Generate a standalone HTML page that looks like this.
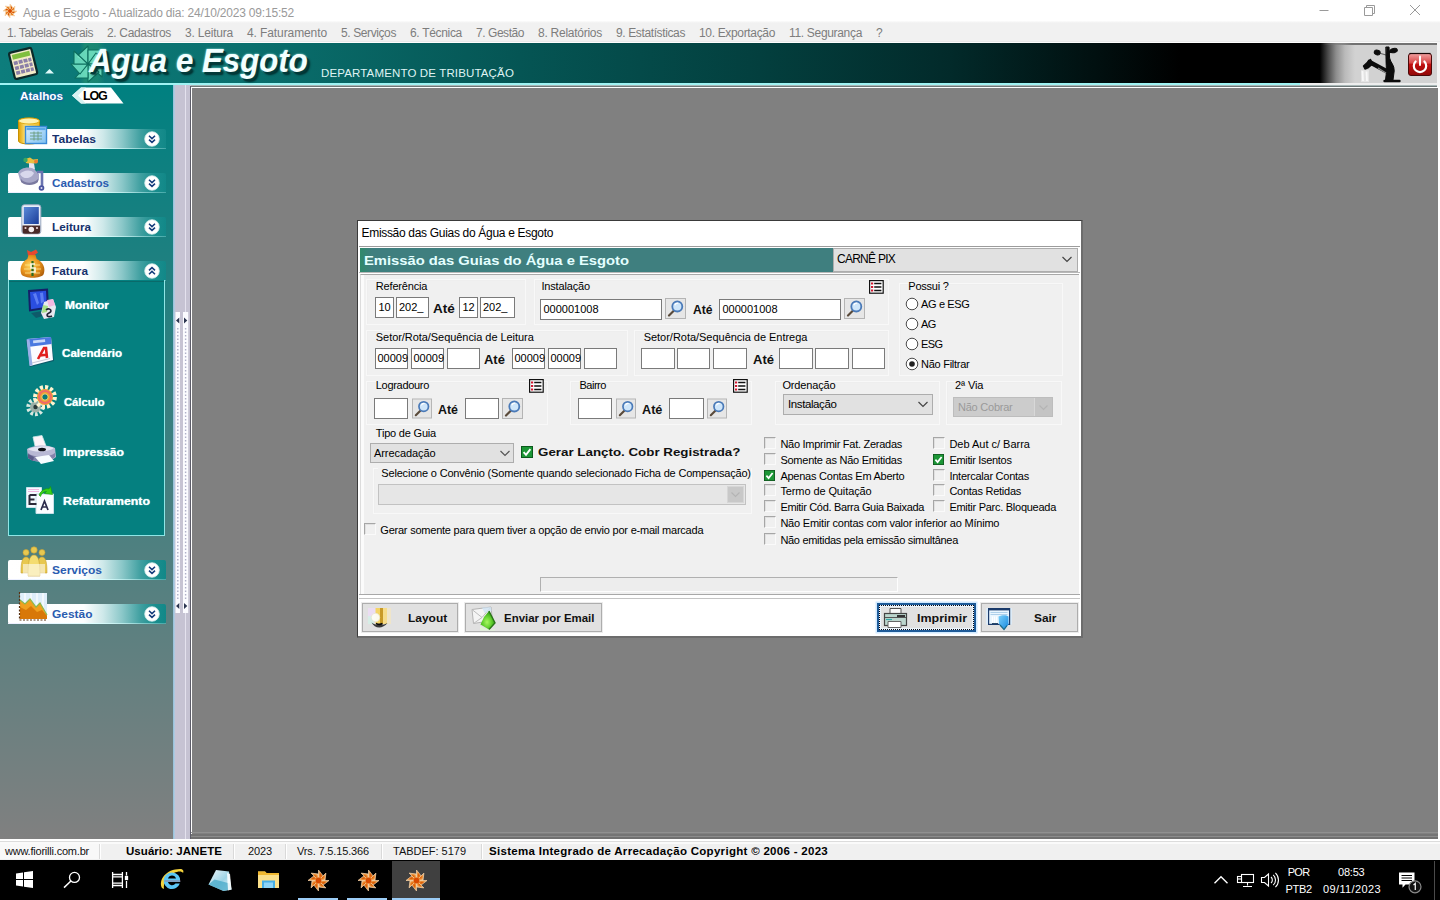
<!DOCTYPE html>
<html><head><meta charset="utf-8"><title>Agua e Esgoto</title>
<style>
html,body{margin:0;padding:0;}
body{width:1440px;height:900px;overflow:hidden;position:relative;background:#808080;font-family:"Liberation Sans",sans-serif;font-size:11px;}
body div,body span,body svg{position:absolute;box-sizing:border-box;}
svg{overflow:visible}
.inp{background:#fff;border:1px solid #7a7a7a;}
.btn{background:#e1e1e1;border:1px solid #adadad;}
.cb{background:#f0f0f0;border:1px solid #a0a0a0;border-right-color:#fff;border-bottom-color:#fff;}
</style></head><body>
<div style="left:0px;top:0px;width:1440px;height:23px;background:linear-gradient(180deg,#fff 0,#fff 20.5px,#f1f1f1 23px);"></div>
<span id="t0" style="left:23px;top:4.64px;font-size:12px;line-height:16px;height:16px;color:#9a9a9a;font-weight:normal;white-space:pre;letter-spacing:-0.194px;">Agua e Esgoto - Atualizado dia: 24/10/2023 09:15:52</span>
<svg style="left:1300px;top:0" width="140" height="23"><g stroke="#9a9a9a" stroke-width="1" fill="none" transform="translate(-1300,-1)"><path d="M1319.500 11.500h9"/><path d="M1364.500 8.500h8v8h-8zM1366.500 8.500v-2h8v8h-2"/><path d="M1410 6l10 10M1420 6l-10 10"/></g></svg>
<div style="left:0px;top:23px;width:1440px;height:19px;background:#f1f1f1;"></div>
<span id="t1" style="left:7px;top:24.84px;font-size:12px;line-height:16px;height:16px;color:#7d7d7d;font-weight:normal;white-space:pre;letter-spacing:-0.422px;">1. Tabelas Gerais</span>
<span id="t2" style="left:107px;top:24.84px;font-size:12px;line-height:16px;height:16px;color:#7d7d7d;font-weight:normal;white-space:pre;letter-spacing:-0.337px;">2. Cadastros</span>
<span id="t3" style="left:185px;top:24.84px;font-size:12px;line-height:16px;height:16px;color:#7d7d7d;font-weight:normal;white-space:pre;letter-spacing:-0.205px;">3. Leitura</span>
<span id="t4" style="left:247px;top:24.84px;font-size:12px;line-height:16px;height:16px;color:#7d7d7d;font-weight:normal;white-space:pre;letter-spacing:-0.098px;">4. Faturamento</span>
<span id="t5" style="left:341px;top:24.84px;font-size:12px;line-height:16px;height:16px;color:#7d7d7d;font-weight:normal;white-space:pre;letter-spacing:-0.396px;">5. Serviços</span>
<span id="t6" style="left:410px;top:24.84px;font-size:12px;line-height:16px;height:16px;color:#7d7d7d;font-weight:normal;white-space:pre;letter-spacing:-0.316px;">6. Técnica</span>
<span id="t7" style="left:476px;top:24.84px;font-size:12px;line-height:16px;height:16px;color:#7d7d7d;font-weight:normal;white-space:pre;letter-spacing:-0.448px;">7. Gestão</span>
<span id="t8" style="left:538px;top:24.84px;font-size:12px;line-height:16px;height:16px;color:#7d7d7d;font-weight:normal;white-space:pre;letter-spacing:-0.260px;">8. Relatórios</span>
<span id="t9" style="left:616px;top:24.84px;font-size:12px;line-height:16px;height:16px;color:#7d7d7d;font-weight:normal;white-space:pre;letter-spacing:-0.380px;">9. Estatísticas</span>
<span id="t10" style="left:699px;top:24.84px;font-size:12px;line-height:16px;height:16px;color:#7d7d7d;font-weight:normal;white-space:pre;letter-spacing:-0.337px;">10. Exportação</span>
<span id="t11" style="left:789px;top:24.84px;font-size:12px;line-height:16px;height:16px;color:#7d7d7d;font-weight:normal;white-space:pre;letter-spacing:-0.321px;">11. Segurança</span>
<span id="t12" style="left:876px;top:24.84px;font-size:12px;line-height:16px;height:16px;color:#7d7d7d;font-weight:normal;white-space:pre;">?</span>
<div style="left:0px;top:41px;width:1440px;height:1px;background:#e9e9e9;"></div>
<div style="left:0px;top:42px;width:1440px;height:1px;background:#fdfdfd;"></div>
<div style="left:0px;top:43px;width:1440px;height:40px;background:linear-gradient(90deg,#0d7d7c 0px,#0a6f6d 250px,#055554 520px,#033f3e 760px,#022a2a 950px,#010f0f 1100px,#000 1180px,#000 1320px,#4a4a4a 1328px,#8c8c8c 1336px,#bababa 1345px,#d2d2d2 1355px,#d2d2d2 1440px);"></div>
<div style="left:0px;top:83px;width:1440px;height:2px;background:#9ff3f3;"></div>
<div style="left:1300px;top:83px;width:140px;height:2px;background:#eee;"></div>
<div style="left:0px;top:85px;width:1440px;height:1px;background:#a9b7b7;"></div>
<div style="left:0px;top:86px;width:1440px;height:1px;background:#6e7878;"></div>
<div style="left:1322px;top:43px;width:115px;height:2px;background:linear-gradient(90deg,rgba(112,112,112,0),#727272 30px);"></div>
<div style="left:0px;top:85px;width:173px;height:754px;background:linear-gradient(180deg,#008080 0%,#808080 100%);"></div>
<div style="left:173px;top:85px;width:18px;height:754px;background:#c6c3d3;"></div>
<div style="left:173px;top:85px;width:2px;height:754px;background:linear-gradient(90deg,#8fc0d8,#bccde2);"></div>
<div style="left:185px;top:85px;width:1px;height:754px;background:#e4e2ee;"></div>
<div style="left:190px;top:86px;width:1px;height:753px;background:#5e5e6a;"></div>
<div style="left:191px;top:87px;width:1247px;height:752px;background:#808080;border-left:1px solid #fff;border-top:1px solid #fff;"></div>
<div style="left:191px;top:832px;width:1247px;height:1px;background:#909090;"></div>
<div style="left:191px;top:834px;width:1247px;height:2px;background:#747474;"></div>
<div style="left:191px;top:836px;width:1247px;height:1px;background:#8c8c8c;"></div>
<div style="left:191px;top:837px;width:1247px;height:2px;background:#707070;"></div>
<div style="left:1438px;top:85px;width:2px;height:754px;background:#fff;"></div>
<div style="left:0px;top:839px;width:1440px;height:21px;background:#f0f0f0;"></div>
<div style="left:0px;top:839px;width:1440px;height:2px;background:#fff;"></div>
<div style="left:0px;top:841px;width:1440px;height:1px;background:#dcdcdc;"></div>
<div style="left:0px;top:842px;width:1440px;height:2px;background:#fafafa;"></div>
<div style="left:0px;top:844px;width:99px;height:15px;background:#f8f8f8;"></div>
<div style="left:99px;top:844px;width:1px;height:15px;background:#d9d9d9;"></div>
<div style="left:100px;top:844px;width:1px;height:15px;background:#fff;"></div>
<div style="left:233px;top:844px;width:1px;height:15px;background:#d9d9d9;"></div>
<div style="left:234px;top:844px;width:1px;height:15px;background:#fff;"></div>
<div style="left:285px;top:844px;width:1px;height:15px;background:#d9d9d9;"></div>
<div style="left:286px;top:844px;width:1px;height:15px;background:#fff;"></div>
<div style="left:381px;top:844px;width:1px;height:15px;background:#d9d9d9;"></div>
<div style="left:382px;top:844px;width:1px;height:15px;background:#fff;"></div>
<div style="left:481px;top:844px;width:1px;height:15px;background:#d9d9d9;"></div>
<div style="left:482px;top:844px;width:1px;height:15px;background:#fff;"></div>
<span id="t13" style="left:5px;top:843.69px;font-size:11px;line-height:14px;height:14px;color:#111;font-weight:normal;white-space:pre;letter-spacing:-0.211px;">www.fiorilli.com.br</span>
<span id="t14" style="left:126px;top:843.52px;font-size:11.5px;line-height:15px;height:15px;color:#000;font-weight:bold;white-space:pre;letter-spacing:0.052px;">Usuário: JANETE</span>
<span id="t15" style="left:248px;top:843.69px;font-size:11px;line-height:14px;height:14px;color:#111;font-weight:normal;white-space:pre;letter-spacing:-0.121px;">2023</span>
<span id="t16" style="left:297px;top:843.69px;font-size:11px;line-height:14px;height:14px;color:#111;font-weight:normal;white-space:pre;letter-spacing:-0.147px;">Vrs. 7.5.15.366</span>
<span id="t17" style="left:393px;top:843.69px;font-size:11px;line-height:14px;height:14px;color:#111;font-weight:normal;white-space:pre;letter-spacing:-0.014px;">TABDEF: 5179</span>
<span id="t18" style="left:489px;top:843.52px;font-size:11.5px;line-height:15px;height:15px;color:#000;font-weight:bold;white-space:pre;letter-spacing:0.295px;">Sistema Integrado de Arrecadação Copyright © 2006 - 2023</span>
<div style="left:0px;top:860px;width:1440px;height:40px;background:#000;"></div>
<svg style="left:6px;top:45px" width="34" height="36" viewBox="0 0 34 36">
<g transform="rotate(-14 17 18)">
<rect x="5.5" y="5" width="23" height="27" rx="2" fill="#f3ecc8" stroke="#0c2a2a" stroke-width="2.2"/>
<rect x="8" y="7.5" width="18" height="5" fill="#7fbf3f"/>
<g fill="#8a7fa8"><rect x="8" y="14.5" width="4" height="3.6"/><rect x="13" y="14.5" width="4" height="3.6"/><rect x="18" y="14.5" width="4" height="3.6"/><rect x="23" y="14.5" width="3" height="3.6"/>
<rect x="8" y="19.5" width="4" height="3.6"/><rect x="13" y="19.5" width="4" height="3.6"/><rect x="18" y="19.5" width="4" height="3.6"/><rect x="23" y="19.5" width="3" height="3.6"/>
<rect x="8" y="24.5" width="4" height="3.6"/><rect x="13" y="24.5" width="4" height="3.6"/><rect x="18" y="24.5" width="4" height="3.6"/><rect x="23" y="24.5" width="3" height="3.6"/></g>
</g></svg>
<svg style="left:44px;top:68px" width="12" height="7"><path d="M1 5.5L5.5 1L10 5.5z" fill="#dffafa"/></svg>
<div style="left:80px;top:43px;width:25px;height:40px;background:linear-gradient(90deg,rgba(40,150,110,0),rgba(40,150,110,.55) 20%,rgba(40,150,110,.45) 70%,rgba(40,150,110,0));"></div>
<svg style="left:68px;top:44px" width="40" height="40" viewBox="-20 -20 40 40">
<g fill="rgba(125,238,205,.78)" stroke="#0d6e5e" stroke-width="1.1" stroke-linejoin="round">
<path d="M0 0L0 -18L-12 -7z"/><path d="M0 0L13 -14L0 -14z" /><path d="M0 0L18 0L8 -11z"/><path d="M0 0L14 13L14 0z"/>
<path d="M0 0L0 18L11 8z"/><path d="M0 0L-13 14L0 14z"/><path d="M0 0L-17 0L-8 10z"/><path d="M0 0L-14 -13L-14 0z"/>
</g></svg>
<span id="t19" style="left:89px;top:37.72px;font-size:34px;line-height:44px;height:44px;color:#f2ffff;font-weight:bold;white-space:pre;font-style:italic;transform:scaleX(0.9200);transform-origin:0 50%;text-shadow:2px 2px 0 #013a3a,3px 3px 2px #012c2c,0 0 2px #bff;">Agua e Esgoto</span>
<span id="t20" style="left:321px;top:66.02px;font-size:11.5px;line-height:15px;height:15px;color:#dff3f3;font-weight:normal;white-space:pre;letter-spacing:0.148px;">DEPARTAMENTO DE TRIBUTAÇÃO</span>
<svg style="left:1358px;top:44px" width="44" height="40" viewBox="0 0 44 40">
<path d="M3 26h8v12H3z" fill="#e9e9e9" opacity=".8"/>
<g fill="#0c0c0c" stroke="#0c0c0c" stroke-linecap="round" stroke-linejoin="round">
<path d="M28.200 3h2.800l.6 11c.8 4.500 5 7 4.600 13l-1.200 9h-7.500l1-8.500c.2-4-.8-8-.5-12z" stroke-width="1"/>
<ellipse cx="19.200" cy="8.500" rx="3" ry="2.300" transform="rotate(15 19.200 8.500)" stroke-width="1"/>
<path d="M22 9.200l6 1.800" stroke-width="1.200" fill="none" opacity=".55"/>
<ellipse cx="35.800" cy="6.600" rx="3.600" ry="2.100" transform="rotate(-12 35.800 6.600)" stroke-width="1"/>
<path d="M30 8.500l4-1.500" stroke-width="2.600" fill="none"/>
<path d="M32 29L11.500 18" stroke-width="4.600" fill="none"/>
<path d="M12.500 15.500l-7 6.500l1.500 3l3.500-1.500l4-3.500z" stroke-width="1.400"/>
<path d="M26.500 37h15" stroke-width="2.400" fill="none"/>
</g>
<path d="M20 24l8 5" stroke="#8a8a8a" stroke-width="1.400" fill="none"/>
<path d="M4.500 27l.5 10M8.500 27.500l.5 9.500" stroke="#f8f8f8" stroke-width="1.800" fill="none"/>
</svg>
<svg style="left:1407px;top:52px" width="26" height="25" viewBox="0 0 26 25">
<defs><linearGradient id="pw" x1="0" y1="0" x2="0" y2="1"><stop offset="0" stop-color="#f0a0a0"/><stop offset=".42" stop-color="#d84848"/><stop offset=".5" stop-color="#c01010"/><stop offset="1" stop-color="#900808"/></linearGradient></defs>
<rect x="1.500" y="1.500" width="23" height="22" rx="2.500" fill="url(#pw)" stroke="#4a0a0a" stroke-width="1"/>
<path d="M2.500 1.500h21" stroke="#1a0505" stroke-width="1.200"/>
<path d="M8.600 9.500a6.200 6.200 0 1 0 8.800 0" fill="none" stroke="#fff" stroke-width="2.200" stroke-linecap="round"/>
<path d="M13 4.500v8.500" stroke="#fff" stroke-width="2" stroke-linecap="round"/>
</svg>
<div style="left:1437px;top:42px;width:3px;height:45px;background:#f4f4f4;"></div>
<span id="t21" style="left:19.5px;top:88.52px;font-size:11.5px;line-height:15px;height:15px;color:#fff;font-weight:bold;white-space:pre;transform:scaleX(1.0196);transform-origin:0 50%;text-shadow:1px 1px 1px #1a5fa0,-1px 0 1px #1a6fa8,0 -1px 1px #1a6fa8;">Atalhos</span>
<svg style="left:70px;top:86px" width="56" height="19"><path d="M2 9.5L11 1.5H41L53.5 17.5H11z" fill="#fff"/><path d="M2 9.5L11 1.5H16L8 9.5L16 17.5H11z" fill="#d6f2f2"/></svg>
<span id="t22" style="left:83px;top:87.97px;font-size:12.5px;line-height:16px;height:16px;color:#000;font-weight:bold;white-space:pre;letter-spacing:-1.198px;">LOG</span>
<div style="left:8px;top:129px;width:158px;height:20px;background:linear-gradient(90deg,#fff 0,#fdfefe 48%,#cfe9ea 60%,#8cc8c9 72%,#3f9fa0 84%,#1a8e8e 93%,#128888 100%);border-radius:2px;"></div>
<div style="left:8px;top:148px;width:158px;height:1px;background:linear-gradient(90deg,#eef 0,#dff 55%,rgba(120,200,200,.5) 100%);"></div>
<span id="t23" style="left:52px;top:131.82px;font-size:11.5px;line-height:15px;height:15px;color:#16306c;font-weight:bold;white-space:pre;transform:scaleX(1.0480);transform-origin:0 50%;">Tabelas</span>
<svg style="left:144px;top:131px" width="16" height="16" viewBox="-8 -8 16 16"><circle r="7.3" fill="#fff" stroke="#cfeaea" stroke-width=".8"/><path d="M-3 -3.2L0 -0.4L3 -3.2M-3 0.6L0 3.4L3 0.6" fill="none" stroke="#123a7a" stroke-width="1.5"/></svg>
<div style="left:8px;top:173px;width:158px;height:20px;background:linear-gradient(90deg,#fff 0,#fdfefe 48%,#cfe9ea 60%,#8cc8c9 72%,#3f9fa0 84%,#1a8e8e 93%,#128888 100%);border-radius:2px;"></div>
<div style="left:8px;top:192px;width:158px;height:1px;background:linear-gradient(90deg,#eef 0,#dff 55%,rgba(120,200,200,.5) 100%);"></div>
<span id="t24" style="left:52px;top:175.82px;font-size:11.5px;line-height:15px;height:15px;color:#2a5cb0;font-weight:bold;white-space:pre;transform:scaleX(1.0133);transform-origin:0 50%;">Cadastros</span>
<svg style="left:144px;top:175px" width="16" height="16" viewBox="-8 -8 16 16"><circle r="7.3" fill="#fff" stroke="#cfeaea" stroke-width=".8"/><path d="M-3 -3.2L0 -0.4L3 -3.2M-3 0.6L0 3.4L3 0.6" fill="none" stroke="#123a7a" stroke-width="1.5"/></svg>
<div style="left:8px;top:217px;width:158px;height:20px;background:linear-gradient(90deg,#fff 0,#fdfefe 48%,#cfe9ea 60%,#8cc8c9 72%,#3f9fa0 84%,#1a8e8e 93%,#128888 100%);border-radius:2px;"></div>
<div style="left:8px;top:236px;width:158px;height:1px;background:linear-gradient(90deg,#eef 0,#dff 55%,rgba(120,200,200,.5) 100%);"></div>
<span id="t25" style="left:52px;top:219.82px;font-size:11.5px;line-height:15px;height:15px;color:#16306c;font-weight:bold;white-space:pre;transform:scaleX(1.0171);transform-origin:0 50%;">Leitura</span>
<svg style="left:144px;top:219px" width="16" height="16" viewBox="-8 -8 16 16"><circle r="7.3" fill="#fff" stroke="#cfeaea" stroke-width=".8"/><path d="M-3 -3.2L0 -0.4L3 -3.2M-3 0.6L0 3.4L3 0.6" fill="none" stroke="#123a7a" stroke-width="1.5"/></svg>
<div style="left:8px;top:261px;width:158px;height:20px;background:linear-gradient(90deg,#fff 0,#fdfefe 48%,#cfe9ea 60%,#8cc8c9 72%,#3f9fa0 84%,#1a8e8e 93%,#128888 100%);border-radius:2px;"></div>
<div style="left:8px;top:280px;width:158px;height:1px;background:linear-gradient(90deg,#eef 0,#dff 55%,rgba(120,200,200,.5) 100%);"></div>
<span id="t26" style="left:52px;top:263.82px;font-size:11.5px;line-height:15px;height:15px;color:#16306c;font-weight:bold;white-space:pre;transform:scaleX(1.0240);transform-origin:0 50%;">Fatura</span>
<svg style="left:144px;top:263px" width="16" height="16" viewBox="-8 -8 16 16"><circle r="7.3" fill="#fff" stroke="#cfeaea" stroke-width=".8"/><path d="M-3 -3.2L0 -0.4L3 -3.2M-3 0.6L0 3.4L3 0.6" transform="scale(1,-1)" fill="none" stroke="#123a7a" stroke-width="1.5"/></svg>
<div style="left:8px;top:560px;width:158px;height:20px;background:linear-gradient(90deg,#fff 0,#fdfefe 48%,#cfe9ea 60%,#8cc8c9 72%,#3f9fa0 84%,#1a8e8e 93%,#128888 100%);border-radius:2px;"></div>
<div style="left:8px;top:579px;width:158px;height:1px;background:linear-gradient(90deg,#eef 0,#dff 55%,rgba(120,200,200,.5) 100%);"></div>
<span id="t27" style="left:52px;top:562.82px;font-size:11.5px;line-height:15px;height:15px;color:#2a5cb0;font-weight:bold;white-space:pre;transform:scaleX(1.0427);transform-origin:0 50%;">Serviços</span>
<svg style="left:144px;top:562px" width="16" height="16" viewBox="-8 -8 16 16"><circle r="7.3" fill="#fff" stroke="#cfeaea" stroke-width=".8"/><path d="M-3 -3.2L0 -0.4L3 -3.2M-3 0.6L0 3.4L3 0.6" fill="none" stroke="#123a7a" stroke-width="1.5"/></svg>
<div style="left:8px;top:604px;width:158px;height:20px;background:linear-gradient(90deg,#fff 0,#fdfefe 48%,#cfe9ea 60%,#8cc8c9 72%,#3f9fa0 84%,#1a8e8e 93%,#128888 100%);border-radius:2px;"></div>
<div style="left:8px;top:623px;width:158px;height:1px;background:linear-gradient(90deg,#eef 0,#dff 55%,rgba(120,200,200,.5) 100%);"></div>
<span id="t28" style="left:52px;top:606.82px;font-size:11.5px;line-height:15px;height:15px;color:#2a5cb0;font-weight:bold;white-space:pre;transform:scaleX(1.0385);transform-origin:0 50%;">Gestão</span>
<svg style="left:144px;top:606px" width="16" height="16" viewBox="-8 -8 16 16"><circle r="7.3" fill="#fff" stroke="#cfeaea" stroke-width=".8"/><path d="M-3 -3.2L0 -0.4L3 -3.2M-3 0.6L0 3.4L3 0.6" fill="none" stroke="#123a7a" stroke-width="1.5"/></svg>
<div style="left:8px;top:280px;width:157px;height:256px;background:#058080;border:1px solid #8fe6e6;border-top:none;"></div>
<div style="left:9px;top:281px;width:155px;height:1px;background:#0a6a6a;"></div>
<span id="t29" style="left:64.5px;top:297.52px;font-size:11.5px;line-height:15px;height:15px;color:#fff;font-weight:bold;white-space:pre;transform:scaleX(1.0437);transform-origin:0 50%;text-shadow:0 0 1px #cff;">Monitor</span>
<span id="t30" style="left:62px;top:345.52px;font-size:11.5px;line-height:15px;height:15px;color:#fff;font-weight:bold;white-space:pre;transform:scaleX(1.0095);transform-origin:0 50%;text-shadow:0 0 1px #cff;">Calendário</span>
<span id="t31" style="left:64px;top:394.52px;font-size:11.5px;line-height:15px;height:15px;color:#fff;font-weight:bold;white-space:pre;transform:scaleX(0.9748);transform-origin:0 50%;text-shadow:0 0 1px #cff;">Cálculo</span>
<span id="t32" style="left:63px;top:444.52px;font-size:11.5px;line-height:15px;height:15px;color:#fff;font-weight:bold;white-space:pre;transform:scaleX(1.0603);transform-origin:0 50%;text-shadow:0 0 1px #cff;">Impressão</span>
<span id="t33" style="left:63px;top:493.52px;font-size:11.5px;line-height:15px;height:15px;color:#fff;font-weight:bold;white-space:pre;transform:scaleX(1.0720);transform-origin:0 50%;text-shadow:0 0 1px #cff;">Refaturamento</span>
<svg style="left:175px;top:312px" width="15" height="301"><rect x=".5" y="0" width="4.5" height="301" fill="#fbfbff"/><rect x="8" y="0" width="5.2" height="301" fill="#fbfbff"/><g stroke="#aeb0c8" stroke-width="1.4" stroke-dasharray="1.5 2" fill="none"><path d="M2.800 16V288M10.600 16V288"/></g><g fill="#2c3550"><path d="M4.300 5.500L1 8.500L4.300 11.500zM9 5.500L12.300 8.500L9 11.500zM4.300 291L1 294L4.300 297zM9 291L12.300 294L9 297z"/></g></svg>
<svg style="left:17px;top:116px" width="32" height="30" viewBox="0 0 32 30">
<defs><linearGradient id="cy" x1="0" y1="0" x2="1" y2="0"><stop offset="0" stop-color="#e0a000"/><stop offset=".35" stop-color="#ffe680"/><stop offset="1" stop-color="#f0b820"/></linearGradient>
<linearGradient id="bw" x1="0" y1="0" x2="1" y2="1"><stop offset="0" stop-color="#d8efff"/><stop offset="1" stop-color="#7fc0f0"/></linearGradient></defs>
<path d="M1.5 5c0-4 21-4 21 0v20c0 4-21 4-21 0z" fill="url(#cy)" stroke="#c89000" stroke-width="1"/>
<ellipse cx="12" cy="5" rx="10.5" ry="3" fill="#fff2b0" stroke="#d8a000" stroke-width=".8"/>
<rect x="8.5" y="10.5" width="21" height="17" fill="url(#bw)" stroke="#3a8ad8" stroke-width="1.4"/>
<rect x="9.5" y="11.5" width="19" height="2.6" fill="#5aa8e8"/>
<path d="M13 17h12M13 20h12M13 23h12M17 15.5v9M21 15.5v9" stroke="#6a9a7a" stroke-width=".9" fill="none"/>
</svg>
<svg style="left:16px;top:156px" width="32" height="38" viewBox="0 0 32 38">
<path d="M9 3l5-1.5l3 2l5-.5l-1 4l-6 1l-5-1z" fill="#e8c040"/><circle cx="9.5" cy="4" r="2.2" fill="#3aa860"/><circle cx="20" cy="5.5" r="2" fill="#e88030"/>
<path d="M13 7l5 .5l1 6l-6 1z" fill="#e8e4f0"/>
<path d="M2 17c2-6 14-8 18-2l3 3v6c-4 6-16 6-19 0z" fill="#a8a8c8"/>
<path d="M4 18c3-4 11-5 14-1c-2 5-10 8-14 1z" fill="#d8d8ec"/>
<path d="M5 23c4 5 12 5 17 0v3c-4 4-13 4-17 0z" fill="#7a7aa0"/>
<path d="M21 16h5v5M26 20v11" stroke="#6a74b0" stroke-width="2.6" fill="none"/><circle cx="25.5" cy="32" r="2.8" fill="#4a54a0"/><circle cx="25.5" cy="32" r="1" fill="#dde"/>
</svg>
<svg style="left:21px;top:204px" width="21" height="31" viewBox="0 0 21 31">
<defs><linearGradient id="ps" x1="0" y1="0" x2="1" y2="1"><stop offset="0" stop-color="#5a8ad8"/><stop offset="1" stop-color="#1a3c98"/></linearGradient></defs>
<rect x=".8" y=".8" width="19" height="29" rx="2.5" fill="#e8eef8" stroke="#9aa8c0" stroke-width="1"/>
<rect x="2.8" y="3" width="15" height="17" fill="url(#ps)"/>
<path d="M1.5 21.5h17.6v6a2.2 2.2 0 0 1-2.2 2.2H3.7a2.2 2.2 0 0 1-2.2-2.2z" fill="#4a2a28"/>
<circle cx="10.3" cy="25.5" r="2.8" fill="#f4ecec"/><circle cx="4.5" cy="24" r="1.1" fill="#f0d8d8"/><circle cx="16" cy="24" r="1.1" fill="#f0d8d8"/>
</svg>
<svg style="left:19px;top:248px" width="27" height="32" viewBox="0 0 27 32">
<defs><radialGradient id="mb" cx=".4" cy=".45" r=".7"><stop offset="0" stop-color="#ffd860"/><stop offset=".55" stop-color="#e8921c"/><stop offset="1" stop-color="#a85808"/></radialGradient></defs>
<path d="M8 2l4 2l5-2.5l2 3l-4 3l-6 0z" fill="#e84830"/>
<path d="M9.5 7h7l1.2 4c7 3 9 10 7 15c-2 5-20 5-22.4 0c-2-5 0-12 6-15z" fill="url(#mb)"/>
<path d="M6 17h15M5 21h17M6 25h15" stroke="#ffe890" stroke-width="1.2" opacity=".8" fill="none"/>
<path d="M13.5 13v15" stroke="#2a6a20" stroke-width="2.2"/><path d="M16 16h-4v4h4v4h-4.5" stroke="#f8f8e0" stroke-width="1.6" fill="none"/>
</svg>
<svg style="left:25px;top:288px" width="32" height="33" viewBox="0 0 32 33">
<path d="M3 2l20-1.5l1 20l-20 3z" fill="#14206a"/><path d="M5 4l16-1.2l.8 16l-15.8 2.4z" fill="#2a4ee0"/>
<path d="M8 6l3-1l3 10l-2 2zM15 5l3-.5l1 9l-3 2z" fill="#6a8af8" opacity=".8"/>
<path d="M6 25l16-3l3 4l-14 4z" fill="#0e5a6a"/>
<path d="M19 14l9-3l3 8l-2 10l-10 2l-3-6z" fill="#e8e8f0"/><path d="M22 12l6-1l2 6l-6 2z" fill="#f4b8e0"/><path d="M18 17l5 1l-1 6l-5 1z" fill="#a8e088"/>
<path d="M21 22c2-2 5-1 5 1s-4 2-4 4s3 2 5 1" stroke="#223" stroke-width="1.6" fill="none"/>
</svg>
<svg style="left:24px;top:336px" width="32" height="33" viewBox="0 0 32 33">
<path d="M2 4l25-3l3 24l-24 6z" fill="#0e5a6a"/><path d="M3 3l24-2l2 23l-23 6z" fill="#fbfbff"/>
<path d="M3 3l24-2l.6 7l-24 3z" fill="#4a78e0"/><path d="M9 4.5l12-1.2l.2 2.6l-12 1.4z" fill="#c8d8f8"/><path d="M2.5 3.5l3-.3l3 26l-3 .8z" fill="#9ab0e8"/>
<path d="M14 23l6-11l2 0l1 10M16 19.5l6-.8" stroke="#e02020" stroke-width="2.6" fill="none"/>
<path d="M8 27l18-4.5" stroke="#c8c8d8" stroke-width="1"/>
</svg>
<svg style="left:24px;top:384px" width="34" height="34" viewBox="0 0 34 34">
<g transform="translate(11.5,23)"><circle r="7" fill="none" stroke="#d8e8e0" stroke-width="4.5" stroke-dasharray="2.6 1.8"/><circle r="5.5" fill="#9ab0a8"/><circle r="2.2" fill="#2a3a3a"/></g>
<g transform="translate(21,13)"><circle r="9.6" fill="none" stroke="#fff4d0" stroke-width="4.6" stroke-dasharray="3 2"/><circle r="8" fill="#f0a030"/><circle r="6" fill="none" stroke="#f06a6a" stroke-width="2"/><circle r="3.2" fill="#0a7a78"/><circle r="3.2" fill="none" stroke="#ffd070" stroke-width="1"/></g>
</svg>
<svg style="left:25px;top:434px" width="32" height="32" viewBox="0 0 32 32">
<path d="M8 3l9-1.5l5 13l-11 2z" fill="#fdf4f8" stroke="#c8e8e8" stroke-width=".8"/>
<path d="M2 15c6-4 20-5 28-1l1 9c-6 6-22 6-28 1z" fill="#b8b8d4"/><path d="M3 15c6-3 20-4 26-1c-5 4-20 5-26 1z" fill="#e4e4f2"/>
<ellipse cx="17" cy="15.5" rx="4" ry="1.8" fill="#101018"/>
<path d="M3 19c6 5 20 5 27 0v4c-6 6-22 6-27 1z" fill="#8484ac"/>
<path d="M10 23l14-2l5 6l-13 3z" fill="#f8fcff"/><path d="M3 20l6 3l-1 4l-5-3z" fill="#5a5a88"/>
</svg>
<svg style="left:25px;top:486px" width="31" height="29" viewBox="0 0 31 29">
<path d="M1.5 1.5h15v20h-15z" fill="#f4fbff" stroke="#c8e0ea" stroke-width="1"/><path d="M11 8h17.5v19.5H11z" fill="#fbfdff" stroke="#c8e0ea" stroke-width="1"/>
<path d="M3 3.5h11M3 5.5h11" stroke="#f0b8e0" stroke-width="1"/>
<path d="M4.5 9h7M4.5 9v9h7M4.5 13.5h5" stroke="#2a2a3a" stroke-width="2" fill="none"/>
<path d="M16 24l3.5-9l3.5 9M17.3 21h4.6" stroke="#2a2a4a" stroke-width="1.7" fill="none"/>
<path d="M14 9c2-5 7-7 10-6l1.5-2.5l2 8l-8-1l2-2c-3 0-5 2-6 5z" fill="#38d018" stroke="#189808" stroke-width=".6"/>
</svg>
<svg style="left:19px;top:546px" width="30" height="33" viewBox="0 0 30 33">
<g fill="#e8c850" stroke="#c8a030" stroke-width=".6"><circle cx="7" cy="6.5" r="3"/><circle cx="15" cy="4" r="3.2"/><circle cx="23" cy="6.5" r="3"/>
<path d="M2 27c0-10 1-16 5-16s5 6 5 16z"/><path d="M18 27c0-10 1-16 5-16s5 6 5 16z"/><path d="M9 30c0-13 1-21 6-21s6 8 6 21z" fill="#f4dc70"/></g>
<path d="M4 18h22v12H4z" fill="#fff" opacity=".55"/>
</svg>
<svg style="left:16px;top:590px" width="33" height="33" viewBox="0 0 33 33">
<rect x="4" y="3" width="27" height="26" fill="#dfeefa"/><path d="M9 3v26M15 3v26M21 3v26M27 3v26" stroke="#fff" stroke-width="1.2"/>
<path d="M4 29V10l5 4l5-5l6 8l4-4l7 12v4z" fill="#f0a020"/><path d="M4 29V17l6 3l5-4l6 6l5-2l5 6v3z" fill="#d87808"/>
<path d="M4 10l5 4l5-5l6 8l4-4l7 12" stroke="#8ab850" stroke-width="1.2" fill="none"/>
<path d="M3.5 2v28h28" stroke="#5a3010" stroke-width="1.2" fill="none" stroke-dasharray="2 1.5"/>
</svg>
<div style="left:357px;top:220px;width:726px;height:418px;background:#fff;border:1px solid #3a3a3a;border-right:2px solid #6c6c6c;border-bottom:2px solid #6c6c6c;"></div>
<span id="t34" style="left:361.5px;top:225.04px;font-size:12px;line-height:16px;height:16px;color:#000;font-weight:normal;white-space:pre;letter-spacing:-0.312px;">Emissão das Guias do Água e Esgoto</span>
<div style="left:359px;top:246px;width:721px;height:1px;background:#9c9c9c;"></div>
<div style="left:360px;top:248px;width:473px;height:24px;background:#3f7f7f;"></div>
<div style="left:360px;top:248px;width:12px;height:24px;background:linear-gradient(90deg,#2f8a6a,#3f7f7f);"></div>
<span id="t35" style="left:364px;top:252.67px;font-size:12.5px;line-height:16px;height:16px;color:#e4ffff;font-weight:bold;white-space:pre;transform:scaleX(1.1811);transform-origin:0 50%;">Emissão das Guias do Água e Esgoto</span>
<div style="left:833px;top:248px;width:245px;height:24px;background:#e1e1e1;border:1px solid #adadad;"></div>
<span id="t36" style="left:837px;top:250.84px;font-size:12px;line-height:16px;height:16px;color:#000;font-weight:normal;white-space:pre;letter-spacing:-0.743px;">CARNÊ PIX</span>
<svg style="left:1061px;top:255px" width="12" height="9"><path d="M1.5 2L6 6.5L10.5 2" fill="none" stroke="#444" stroke-width="1.2"/></svg>
<div style="left:359px;top:272px;width:721px;height:1px;background:#b8b8b8;"></div>
<div style="left:359px;top:273px;width:721px;height:1px;background:#fff;"></div>
<div style="left:360px;top:274px;width:719px;height:320px;background:#f0f0f0;border-left:1px solid #dcdcdc;border-top:1px solid #a8a8a8;"></div>
<div style="left:361px;top:275px;width:3px;height:319px;background:#fbfbfb;"></div>
<div style="left:359px;top:594px;width:721px;height:1px;background:#a8a8a8;"></div>
<div style="left:359px;top:598px;width:721px;height:1px;background:#c4c4c4;"></div>
<div style="left:366px;top:279px;width:160px;height:46px;border:1px solid #f8f8f8;box-shadow:inset 1px 1px 0 #eeeeee;"></div>
<span id="t37" style="left:375.8px;top:278.99px;font-size:11px;line-height:14px;height:14px;color:#000;font-weight:normal;white-space:pre;letter-spacing:-0.170px;">Referência</span>
<div class="inp" style="overflow:hidden;left:375px;top:297px;width:19px;height:21px;"></div>
<span id="t38" style="left:378.5px;top:299.69px;font-size:11px;line-height:14px;height:14px;color:#000;font-weight:normal;white-space:pre;">10</span>
<div class="inp" style="overflow:hidden;left:396px;top:297px;width:33px;height:21px;"></div>
<span id="t39" style="left:399px;top:299.69px;font-size:11px;line-height:14px;height:14px;color:#000;font-weight:normal;white-space:pre;">202_</span>
<span id="t40" style="left:433.2px;top:300.54px;font-size:12px;line-height:16px;height:16px;color:#111;font-weight:bold;white-space:pre;transform:scaleX(1.1270);transform-origin:0 50%;">Até</span>
<div class="inp" style="overflow:hidden;left:459px;top:297px;width:19px;height:21px;"></div>
<span id="t41" style="left:462.5px;top:299.69px;font-size:11px;line-height:14px;height:14px;color:#000;font-weight:normal;white-space:pre;">12</span>
<div class="inp" style="overflow:hidden;left:480px;top:297px;width:35px;height:21px;"></div>
<span id="t42" style="left:483px;top:299.69px;font-size:11px;line-height:14px;height:14px;color:#000;font-weight:normal;white-space:pre;">202_</span>
<div style="left:534px;top:279px;width:355px;height:46px;border:1px solid #f8f8f8;box-shadow:inset 1px 1px 0 #eeeeee;"></div>
<span id="t43" style="left:541.4px;top:278.99px;font-size:11px;line-height:14px;height:14px;color:#000;font-weight:normal;white-space:pre;letter-spacing:-0.156px;">Instalação</span>
<div class="inp" style="overflow:hidden;left:540px;top:299px;width:122px;height:21px;"></div>
<span id="t44" style="left:543.5px;top:301.69px;font-size:11px;line-height:14px;height:14px;color:#000;font-weight:normal;white-space:pre;">000001008</span>
<svg style="left:665px;top:298px" width="21" height="21" viewBox="0 0 21 21"><rect x=".5" y=".5" width="20" height="20" fill="#e6e6e6" stroke="#b4b4b4"/>
<path d="M4 17.5L9.5 12" stroke="#5a4a3a" stroke-width="2.2" stroke-linecap="round"/><circle cx="12.3" cy="8.5" r="5" fill="#cfe6fa" stroke="#4a7ab8" stroke-width="1.8"/><path d="M9.8 7.2a3.2 3.2 0 0 1 3.5-2" stroke="#fff" stroke-width="1.2" fill="none"/></svg>
<span id="t45" style="left:692.5px;top:302.34px;font-size:12px;line-height:16px;height:16px;color:#111;font-weight:bold;white-space:pre;transform:scaleX(1.0081);transform-origin:0 50%;">Até</span>
<div class="inp" style="overflow:hidden;left:719px;top:299px;width:122px;height:21px;"></div>
<span id="t46" style="left:722.5px;top:301.69px;font-size:11px;line-height:14px;height:14px;color:#000;font-weight:normal;white-space:pre;">000001008</span>
<svg style="left:844px;top:298px" width="21" height="21" viewBox="0 0 21 21"><rect x=".5" y=".5" width="20" height="20" fill="#e6e6e6" stroke="#b4b4b4"/>
<path d="M4 17.5L9.5 12" stroke="#5a4a3a" stroke-width="2.2" stroke-linecap="round"/><circle cx="12.3" cy="8.5" r="5" fill="#cfe6fa" stroke="#4a7ab8" stroke-width="1.8"/><path d="M9.8 7.2a3.2 3.2 0 0 1 3.5-2" stroke="#fff" stroke-width="1.2" fill="none"/></svg>
<svg style="left:869px;top:280px" width="15" height="14" viewBox="0 0 15 14"><rect x=".6" y=".6" width="13.6" height="12.6" fill="#fff" stroke="#111" stroke-width="1.2"/>
<path d="M5.2 3.5h7.2M5.2 7h7.2M5.2 10.5h7.2" stroke="#111" stroke-width="1.6"/><path d="M2 3.5h2.2M2 7h2.2M2 10.5h2.2" stroke="#d01830" stroke-width="1.8"/></svg>
<div style="left:899px;top:283px;width:164px;height:93px;border:1px solid #f8f8f8;box-shadow:inset 1px 1px 0 #eeeeee;"></div>
<span id="t47" style="left:908.3px;top:278.69px;font-size:11px;line-height:14px;height:14px;color:#000;font-weight:normal;white-space:pre;letter-spacing:-0.225px;">Possui ?</span>
<svg style="left:904.5px;top:296.5px" width="14" height="14"><circle cx="7" cy="7" r="5.8" fill="#fff" stroke="#4a4a4a" stroke-width="1"/></svg>
<span id="t48" style="left:921px;top:296.69px;font-size:11px;line-height:14px;height:14px;color:#000;font-weight:normal;white-space:pre;letter-spacing:-0.357px;">AG e ESG</span>
<svg style="left:904.5px;top:316.5px" width="14" height="14"><circle cx="7" cy="7" r="5.8" fill="#fff" stroke="#4a4a4a" stroke-width="1"/></svg>
<span id="t49" style="left:921px;top:316.69px;font-size:11px;line-height:14px;height:14px;color:#000;font-weight:normal;white-space:pre;letter-spacing:-0.703px;">AG</span>
<svg style="left:904.5px;top:336.5px" width="14" height="14"><circle cx="7" cy="7" r="5.8" fill="#fff" stroke="#4a4a4a" stroke-width="1"/></svg>
<span id="t50" style="left:921px;top:336.69px;font-size:11px;line-height:14px;height:14px;color:#000;font-weight:normal;white-space:pre;letter-spacing:-0.578px;">ESG</span>
<svg style="left:904.5px;top:356.5px" width="14" height="14"><circle cx="7" cy="7" r="5.8" fill="#fff" stroke="#4a4a4a" stroke-width="1"/><circle cx="7" cy="7" r="2.8" fill="#222"/></svg>
<span id="t51" style="left:921px;top:356.69px;font-size:11px;line-height:14px;height:14px;color:#000;font-weight:normal;white-space:pre;letter-spacing:-0.259px;">Não Filtrar</span>
<div style="left:366px;top:330px;width:262px;height:46px;border:1px solid #f8f8f8;box-shadow:inset 1px 1px 0 #eeeeee;"></div>
<span id="t52" style="left:375.8px;top:330.19px;font-size:11px;line-height:14px;height:14px;color:#000;font-weight:normal;white-space:pre;letter-spacing:-0.055px;">Setor/Rota/Sequência de Leitura</span>
<div class="inp" style="overflow:hidden;left:374.5px;top:348px;width:33.5px;height:21px;"></div>
<span id="t53" style="left:377.5px;top:350.69px;font-size:11px;line-height:14px;height:14px;color:#000;font-weight:normal;white-space:pre;">00009</span>
<div class="inp" style="overflow:hidden;left:410.5px;top:348px;width:33.0px;height:21px;"></div>
<span id="t54" style="left:413.5px;top:350.69px;font-size:11px;line-height:14px;height:14px;color:#000;font-weight:normal;white-space:pre;">00009</span>
<div class="inp" style="left:446.5px;top:348px;width:33.5px;height:21px;"></div>
<span id="t55" style="left:483.6px;top:351.84px;font-size:12px;line-height:16px;height:16px;color:#111;font-weight:bold;white-space:pre;transform:scaleX(1.0805);transform-origin:0 50%;">Até</span>
<div class="inp" style="overflow:hidden;left:511.5px;top:348px;width:33.0px;height:21px;"></div>
<span id="t56" style="left:514.5px;top:350.69px;font-size:11px;line-height:14px;height:14px;color:#000;font-weight:normal;white-space:pre;">00009</span>
<div class="inp" style="overflow:hidden;left:547.5px;top:348px;width:33.0px;height:21px;"></div>
<span id="t57" style="left:550.5px;top:350.69px;font-size:11px;line-height:14px;height:14px;color:#000;font-weight:normal;white-space:pre;">00009</span>
<div class="inp" style="left:583.5px;top:348px;width:33.0px;height:21px;"></div>
<div style="left:634px;top:330px;width:255px;height:46px;border:1px solid #f8f8f8;box-shadow:inset 1px 1px 0 #eeeeee;"></div>
<span id="t58" style="left:643.7px;top:330.19px;font-size:11px;line-height:14px;height:14px;color:#000;font-weight:normal;white-space:pre;letter-spacing:-0.026px;">Setor/Rota/Sequência de Entrega</span>
<div class="inp" style="left:641px;top:348px;width:33.5px;height:21px;"></div>
<div class="inp" style="left:677px;top:348px;width:33px;height:21px;"></div>
<div class="inp" style="left:713px;top:348px;width:33.5px;height:21px;"></div>
<span id="t59" style="left:753px;top:351.84px;font-size:12px;line-height:16px;height:16px;color:#111;font-weight:bold;white-space:pre;transform:scaleX(1.0856);transform-origin:0 50%;">Até</span>
<div class="inp" style="left:779px;top:348px;width:33.5px;height:21px;"></div>
<div class="inp" style="left:815px;top:348px;width:33.5px;height:21px;"></div>
<div class="inp" style="left:851.5px;top:348px;width:33.5px;height:21px;"></div>
<div style="left:366px;top:381px;width:182px;height:44px;border:1px solid #f8f8f8;box-shadow:inset 1px 1px 0 #eeeeee;"></div>
<span id="t60" style="left:375.8px;top:378.19px;font-size:11px;line-height:14px;height:14px;color:#000;font-weight:normal;white-space:pre;letter-spacing:-0.308px;">Logradouro</span>
<svg style="left:529px;top:379px" width="15" height="14" viewBox="0 0 15 14"><rect x=".6" y=".6" width="13.6" height="12.6" fill="#fff" stroke="#111" stroke-width="1.2"/>
<path d="M5.2 3.5h7.2M5.2 7h7.2M5.2 10.5h7.2" stroke="#111" stroke-width="1.6"/><path d="M2 3.5h2.2M2 7h2.2M2 10.5h2.2" stroke="#d01830" stroke-width="1.8"/></svg>
<div class="inp" style="left:374px;top:398px;width:34px;height:21px;"></div>
<svg style="left:412px;top:397.5px" width="20" height="21" viewBox="0 0 21 21"><rect x=".5" y=".5" width="20" height="20" fill="#e6e6e6" stroke="#b4b4b4"/>
<path d="M4 17.5L9.5 12" stroke="#5a4a3a" stroke-width="2.2" stroke-linecap="round"/><circle cx="12.3" cy="8.5" r="5" fill="#cfe6fa" stroke="#4a7ab8" stroke-width="1.8"/><path d="M9.8 7.2a3.2 3.2 0 0 1 3.5-2" stroke="#fff" stroke-width="1.2" fill="none"/></svg>
<span id="t61" style="left:438px;top:401.84px;font-size:12px;line-height:16px;height:16px;color:#111;font-weight:bold;white-space:pre;transform:scaleX(1.0339);transform-origin:0 50%;">Até</span>
<div class="inp" style="left:465px;top:398px;width:34px;height:21px;"></div>
<svg style="left:502px;top:397.5px" width="21" height="21" viewBox="0 0 21 21"><rect x=".5" y=".5" width="20" height="20" fill="#e6e6e6" stroke="#b4b4b4"/>
<path d="M4 17.5L9.5 12" stroke="#5a4a3a" stroke-width="2.2" stroke-linecap="round"/><circle cx="12.3" cy="8.5" r="5" fill="#cfe6fa" stroke="#4a7ab8" stroke-width="1.8"/><path d="M9.8 7.2a3.2 3.2 0 0 1 3.5-2" stroke="#fff" stroke-width="1.2" fill="none"/></svg>
<div style="left:570px;top:381px;width:182px;height:44px;border:1px solid #f8f8f8;box-shadow:inset 1px 1px 0 #eeeeee;"></div>
<span id="t62" style="left:579.4px;top:378.19px;font-size:11px;line-height:14px;height:14px;color:#000;font-weight:normal;white-space:pre;letter-spacing:-0.457px;">Bairro</span>
<div class="inp" style="left:577.5px;top:398px;width:34.5px;height:21px;"></div>
<svg style="left:615.5px;top:397.5px" width="20" height="21" viewBox="0 0 21 21"><rect x=".5" y=".5" width="20" height="20" fill="#e6e6e6" stroke="#b4b4b4"/>
<path d="M4 17.5L9.5 12" stroke="#5a4a3a" stroke-width="2.2" stroke-linecap="round"/><circle cx="12.3" cy="8.5" r="5" fill="#cfe6fa" stroke="#4a7ab8" stroke-width="1.8"/><path d="M9.8 7.2a3.2 3.2 0 0 1 3.5-2" stroke="#fff" stroke-width="1.2" fill="none"/></svg>
<span id="t63" style="left:641.6px;top:401.84px;font-size:12px;line-height:16px;height:16px;color:#111;font-weight:bold;white-space:pre;transform:scaleX(1.0546);transform-origin:0 50%;">Até</span>
<div class="inp" style="left:668.5px;top:398px;width:35.0px;height:21px;"></div>
<svg style="left:707px;top:397.5px" width="20" height="21" viewBox="0 0 21 21"><rect x=".5" y=".5" width="20" height="20" fill="#e6e6e6" stroke="#b4b4b4"/>
<path d="M4 17.5L9.5 12" stroke="#5a4a3a" stroke-width="2.2" stroke-linecap="round"/><circle cx="12.3" cy="8.5" r="5" fill="#cfe6fa" stroke="#4a7ab8" stroke-width="1.8"/><path d="M9.8 7.2a3.2 3.2 0 0 1 3.5-2" stroke="#fff" stroke-width="1.2" fill="none"/></svg>
<svg style="left:733px;top:379px" width="15" height="14" viewBox="0 0 15 14"><rect x=".6" y=".6" width="13.6" height="12.6" fill="#fff" stroke="#111" stroke-width="1.2"/>
<path d="M5.2 3.5h7.2M5.2 7h7.2M5.2 10.5h7.2" stroke="#111" stroke-width="1.6"/><path d="M2 3.5h2.2M2 7h2.2M2 10.5h2.2" stroke="#d01830" stroke-width="1.8"/></svg>
<div style="left:775px;top:381px;width:165px;height:44px;border:1px solid #f8f8f8;box-shadow:inset 1px 1px 0 #eeeeee;"></div>
<span id="t64" style="left:782.4px;top:378.19px;font-size:11px;line-height:14px;height:14px;color:#000;font-weight:normal;white-space:pre;letter-spacing:-0.137px;">Ordenação</span>
<div style="left:783px;top:394px;width:150px;height:21px;background:#e1e1e1;border:1px solid #adadad;"></div>
<span id="t65" style="left:788px;top:397.32px;font-size:11.5px;line-height:15px;height:15px;color:#000;font-weight:normal;white-space:pre;letter-spacing:-0.394px;">Instalação</span>
<svg style="left:917px;top:400px" width="12" height="9"><path d="M1.5 2L6 6.5L10.5 2" fill="none" stroke="#444" stroke-width="1.2"/></svg>
<div style="left:946px;top:381px;width:116px;height:44px;border:1px solid #f8f8f8;box-shadow:inset 1px 1px 0 #eeeeee;"></div>
<span id="t66" style="left:955px;top:378.19px;font-size:11px;line-height:14px;height:14px;color:#000;font-weight:normal;white-space:pre;letter-spacing:-0.092px;">2ª Via</span>
<div style="left:953px;top:397px;width:100px;height:20px;background:#cccccc;border:1px solid #bdbdbd;"></div>
<div style="left:1034px;top:398px;width:18px;height:18px;background:#c4c4c4;border-left:1px solid #d8d8d8;"></div>
<span id="t67" style="left:958px;top:400.19px;font-size:11px;line-height:14px;height:14px;color:#9a9a9a;font-weight:normal;white-space:pre;letter-spacing:-0.236px;">Não Cobrar</span>
<svg style="left:1038px;top:404px" width="11" height="8"><path d="M1.5 1.5L5.5 5.5L9.5 1.5" fill="none" stroke="#b4b4b4" stroke-width="1.1"/></svg>
<span id="t68" style="left:375.8px;top:426.19px;font-size:11px;line-height:14px;height:14px;color:#000;font-weight:normal;white-space:pre;letter-spacing:-0.198px;">Tipo de Guia</span>
<div style="left:370px;top:443px;width:144px;height:20px;background:#e1e1e1;border:1px solid #adadad;"></div>
<span id="t69" style="left:374px;top:446.19px;font-size:11px;line-height:14px;height:14px;color:#000;font-weight:normal;white-space:pre;letter-spacing:-0.080px;">Arrecadação</span>
<svg style="left:499px;top:449px" width="12" height="9"><path d="M1.5 2L6 6.5L10.5 2" fill="none" stroke="#555" stroke-width="1.2"/></svg>
<svg style="left:521px;top:445.5px" width="12" height="12" viewBox="0 0 12 12"><rect x=".5" y=".5" width="11" height="11" fill="#1c9636" stroke="#0b5a1c"/><path d="M2.6 6.2L5 8.8L9.4 3.2" fill="none" stroke="#fff" stroke-width="1.9"/></svg>
<span id="t70" style="left:537.6px;top:445.02px;font-size:11.5px;line-height:15px;height:15px;color:#111;font-weight:bold;white-space:pre;transform:scaleX(1.1601);transform-origin:0 50%;">Gerar Lançto. Cobr Registrada?</span>
<div style="left:373px;top:468px;width:379px;height:46px;border:1px solid #f8f8f8;box-shadow:inset 1px 1px 0 #eeeeee;"></div>
<div style="left:378px;top:467px;width:373px;height:12px;background:#f0f0f0;"></div>
<span id="t71" style="left:381.3px;top:466.19px;font-size:11px;line-height:14px;height:14px;color:#000;font-weight:normal;white-space:pre;letter-spacing:-0.181px;">Selecione o Convênio (Somente quando selecionado Ficha de Compensação)</span>
<div style="left:378px;top:484px;width:368px;height:21px;background:#e6e6e6;border:1px solid #c2c2c2;"></div>
<div style="left:727px;top:486px;width:17px;height:17px;background:#c8c8c8;border:1px solid #d6d6d6;"></div>
<svg style="left:730px;top:491px" width="11" height="8"><path d="M1.5 1.5L5.5 5.5L9.5 1.5" fill="none" stroke="#b4b4b4" stroke-width="1.1"/></svg>
<div style="left:364px;top:523px;width:12px;height:12px;background:#f0f0f0;border:1px solid #a6a6a6;border-right-color:#fafafa;border-bottom-color:#fafafa;box-shadow:inset 1px 1px 0 #e0e0e0;"></div>
<span id="t72" style="left:380.3px;top:523.49px;font-size:11px;line-height:14px;height:14px;color:#000;font-weight:normal;white-space:pre;letter-spacing:-0.223px;">Gerar somente para quem tiver a opção de envio por e-mail marcada</span>
<div style="left:764.3px;top:437.2px;width:12px;height:12px;background:#f0f0f0;border:1px solid #a6a6a6;border-right-color:#fafafa;border-bottom-color:#fafafa;box-shadow:inset 1px 1px 0 #e0e0e0;"></div>
<span id="t73" style="left:780.4px;top:437.19px;font-size:11px;line-height:14px;height:14px;color:#000;font-weight:normal;white-space:pre;letter-spacing:-0.271px;">Não Imprimir Fat. Zeradas</span>
<div style="left:764.3px;top:453px;width:12px;height:12px;background:#f0f0f0;border:1px solid #a6a6a6;border-right-color:#fafafa;border-bottom-color:#fafafa;box-shadow:inset 1px 1px 0 #e0e0e0;"></div>
<span id="t74" style="left:780.4px;top:452.99px;font-size:11px;line-height:14px;height:14px;color:#000;font-weight:normal;white-space:pre;letter-spacing:-0.242px;">Somente as Não Emitidas</span>
<svg style="left:764.3px;top:470px" width="11" height="11" viewBox="0 0 12 12"><rect x=".5" y=".5" width="11" height="11" fill="#1c9636" stroke="#0b5a1c"/><path d="M2.6 6.2L5 8.8L9.4 3.2" fill="none" stroke="#fff" stroke-width="1.9"/></svg>
<span id="t75" style="left:780.4px;top:468.99px;font-size:11px;line-height:14px;height:14px;color:#000;font-weight:normal;white-space:pre;letter-spacing:-0.241px;">Apenas Contas Em Aberto</span>
<div style="left:764.3px;top:484px;width:12px;height:12px;background:#f0f0f0;border:1px solid #a6a6a6;border-right-color:#fafafa;border-bottom-color:#fafafa;box-shadow:inset 1px 1px 0 #e0e0e0;"></div>
<span id="t76" style="left:780.4px;top:483.99px;font-size:11px;line-height:14px;height:14px;color:#000;font-weight:normal;white-space:pre;letter-spacing:-0.102px;">Termo de Quitação</span>
<div style="left:764.3px;top:500px;width:12px;height:12px;background:#f0f0f0;border:1px solid #a6a6a6;border-right-color:#fafafa;border-bottom-color:#fafafa;box-shadow:inset 1px 1px 0 #e0e0e0;"></div>
<span id="t77" style="left:780.4px;top:499.99px;font-size:11px;line-height:14px;height:14px;color:#000;font-weight:normal;white-space:pre;letter-spacing:-0.328px;">Emitir Cód. Barra Guia Baixada</span>
<div style="left:764.3px;top:516.3px;width:12px;height:12px;background:#f0f0f0;border:1px solid #a6a6a6;border-right-color:#fafafa;border-bottom-color:#fafafa;box-shadow:inset 1px 1px 0 #e0e0e0;"></div>
<span id="t78" style="left:780.4px;top:516.29px;font-size:11px;line-height:14px;height:14px;color:#000;font-weight:normal;white-space:pre;letter-spacing:-0.212px;">Não Emitir contas com valor inferior ao Mínimo</span>
<div style="left:764.3px;top:533px;width:12px;height:12px;background:#f0f0f0;border:1px solid #a6a6a6;border-right-color:#fafafa;border-bottom-color:#fafafa;box-shadow:inset 1px 1px 0 #e0e0e0;"></div>
<span id="t79" style="left:780.4px;top:532.99px;font-size:11px;line-height:14px;height:14px;color:#000;font-weight:normal;white-space:pre;letter-spacing:-0.298px;">Não emitidas pela emissão simultânea</span>
<div style="left:933.3px;top:437.2px;width:12px;height:12px;background:#f0f0f0;border:1px solid #a6a6a6;border-right-color:#fafafa;border-bottom-color:#fafafa;box-shadow:inset 1px 1px 0 #e0e0e0;"></div>
<span id="t80" style="left:949.4px;top:437.19px;font-size:11px;line-height:14px;height:14px;color:#000;font-weight:normal;white-space:pre;letter-spacing:-0.007px;">Deb Aut c/ Barra</span>
<svg style="left:933.3px;top:454px" width="11" height="11" viewBox="0 0 12 12"><rect x=".5" y=".5" width="11" height="11" fill="#1c9636" stroke="#0b5a1c"/><path d="M2.6 6.2L5 8.8L9.4 3.2" fill="none" stroke="#fff" stroke-width="1.9"/></svg>
<span id="t81" style="left:949.4px;top:452.99px;font-size:11px;line-height:14px;height:14px;color:#000;font-weight:normal;white-space:pre;letter-spacing:-0.317px;">Emitir Isentos</span>
<div style="left:933.3px;top:469px;width:12px;height:12px;background:#f0f0f0;border:1px solid #a6a6a6;border-right-color:#fafafa;border-bottom-color:#fafafa;box-shadow:inset 1px 1px 0 #e0e0e0;"></div>
<span id="t82" style="left:949.4px;top:468.99px;font-size:11px;line-height:14px;height:14px;color:#000;font-weight:normal;white-space:pre;letter-spacing:-0.245px;">Intercalar Contas</span>
<div style="left:933.3px;top:484px;width:12px;height:12px;background:#f0f0f0;border:1px solid #a6a6a6;border-right-color:#fafafa;border-bottom-color:#fafafa;box-shadow:inset 1px 1px 0 #e0e0e0;"></div>
<span id="t83" style="left:949.4px;top:483.99px;font-size:11px;line-height:14px;height:14px;color:#000;font-weight:normal;white-space:pre;letter-spacing:-0.258px;">Contas Retidas</span>
<div style="left:933.3px;top:500px;width:12px;height:12px;background:#f0f0f0;border:1px solid #a6a6a6;border-right-color:#fafafa;border-bottom-color:#fafafa;box-shadow:inset 1px 1px 0 #e0e0e0;"></div>
<span id="t84" style="left:949.4px;top:499.99px;font-size:11px;line-height:14px;height:14px;color:#000;font-weight:normal;white-space:pre;letter-spacing:-0.268px;">Emitir Parc. Bloqueada</span>
<div style="left:540px;top:577px;width:358px;height:15px;background:#ededed;border:1px solid #b0b0b0;border-right-color:#fdfdfd;border-bottom-color:#fdfdfd;"></div>
<div style="left:361.5px;top:603px;width:96.0px;height:29px;background:#e1e1e1;border:1px solid #adadad;box-shadow:0 0 0 1px #ececec;"></div>
<span id="t85" style="left:407.5px;top:611.12px;font-size:11.5px;line-height:15px;height:15px;color:#111;font-weight:bold;white-space:pre;transform:scaleX(1.0397);transform-origin:0 50%;">Layout</span>
<div style="left:464.5px;top:603px;width:137.0px;height:29px;background:#e1e1e1;border:1px solid #adadad;box-shadow:0 0 0 1px #ececec;"></div>
<span id="t86" style="left:504px;top:611.12px;font-size:11.5px;line-height:15px;height:15px;color:#111;font-weight:bold;white-space:pre;transform:scaleX(0.9971);transform-origin:0 50%;">Enviar por Email</span>
<div style="left:876.5px;top:603px;width:99.0px;height:29px;background:#e1e1e1;border:1px solid #adadad;box-shadow:0 0 0 1px #ececec;"></div>
<div style="left:876.5px;top:603px;width:99.0px;height:29px;border:2px solid #1d5a98;box-shadow:0 0 0 1.5px #d2eaff, inset 0 0 0 2px #eaf4fc;"></div>
<div style="left:878.5px;top:605px;width:95.0px;height:25px;border:1px dotted #0a0a14;"></div>
<span id="t87" style="left:917px;top:611.12px;font-size:11.5px;line-height:15px;height:15px;color:#111;font-weight:bold;white-space:pre;transform:scaleX(1.0866);transform-origin:0 50%;">Imprimir</span>
<div style="left:981px;top:603px;width:97px;height:29px;background:#e1e1e1;border:1px solid #adadad;box-shadow:0 0 0 1px #ececec;"></div>
<span id="t88" style="left:1033.5px;top:611.12px;font-size:11.5px;line-height:15px;height:15px;color:#111;font-weight:bold;white-space:pre;transform:scaleX(1.0345);transform-origin:0 50%;">Sair</span>
<div style="left:392px;top:861px;width:48px;height:37px;background:#404040;"></div>
<div style="left:298px;top:898px;width:39.5px;height:2px;background:#9ccdf6;"></div>
<div style="left:346.5px;top:898px;width:40.0px;height:2px;background:#9ccdf6;"></div>
<div style="left:392px;top:898px;width:48px;height:2px;background:#9ccdf6;"></div>
<svg style="left:306.5px;top:868.5px" width="23.0" height="23.0" viewBox="-11.5 -11.5 23.0 23.0"><defs><radialGradient id="pg1" cx=".5" cy=".5" r=".5"><stop offset="0" stop-color="#d85000"/><stop offset=".5" stop-color="#e88020"/><stop offset="1" stop-color="#f0c08a"/></radialGradient></defs><g fill="url(#pg1)" stroke="#f6cfa0" stroke-width=".7"><path d="M0 0L0.0 -10.5L4.6 -4.6z"/><path d="M0 0L7.4 -7.4L6.5 0.0z"/><path d="M0 0L10.5 0.0L4.6 4.6z"/><path d="M0 0L7.4 7.4L0.0 6.5z"/><path d="M0 0L0.0 10.5L-4.6 4.6z"/><path d="M0 0L-7.4 7.4L-6.5 0.0z"/><path d="M0 0L-10.5 0.0L-4.6 -4.6z"/><path d="M0 0L-7.4 -7.4L-0.0 -6.5z"/></g><circle r="2.9" fill="#d84a00"/></svg>
<svg style="left:356.5px;top:868.5px" width="23.0" height="23.0" viewBox="-11.5 -11.5 23.0 23.0"><defs><radialGradient id="pg2" cx=".5" cy=".5" r=".5"><stop offset="0" stop-color="#d85000"/><stop offset=".5" stop-color="#e88020"/><stop offset="1" stop-color="#f0c08a"/></radialGradient></defs><g fill="url(#pg2)" stroke="#f6cfa0" stroke-width=".7"><path d="M0 0L0.0 -10.5L4.6 -4.6z"/><path d="M0 0L7.4 -7.4L6.5 0.0z"/><path d="M0 0L10.5 0.0L4.6 4.6z"/><path d="M0 0L7.4 7.4L0.0 6.5z"/><path d="M0 0L0.0 10.5L-4.6 4.6z"/><path d="M0 0L-7.4 7.4L-6.5 0.0z"/><path d="M0 0L-10.5 0.0L-4.6 -4.6z"/><path d="M0 0L-7.4 -7.4L-0.0 -6.5z"/></g><circle r="2.9" fill="#d84a00"/></svg>
<svg style="left:405.0px;top:868.5px" width="23.0" height="23.0" viewBox="-11.5 -11.5 23.0 23.0"><defs><radialGradient id="pg3" cx=".5" cy=".5" r=".5"><stop offset="0" stop-color="#d85000"/><stop offset=".5" stop-color="#e88020"/><stop offset="1" stop-color="#f0c08a"/></radialGradient></defs><g fill="url(#pg3)" stroke="#f6cfa0" stroke-width=".7"><path d="M0 0L0.0 -10.5L4.6 -4.6z"/><path d="M0 0L7.4 -7.4L6.5 0.0z"/><path d="M0 0L10.5 0.0L4.6 4.6z"/><path d="M0 0L7.4 7.4L0.0 6.5z"/><path d="M0 0L0.0 10.5L-4.6 4.6z"/><path d="M0 0L-7.4 7.4L-6.5 0.0z"/><path d="M0 0L-10.5 0.0L-4.6 -4.6z"/><path d="M0 0L-7.4 -7.4L-0.0 -6.5z"/></g><circle r="2.9" fill="#d84a00"/></svg>
<svg style="left:2px;top:2.5px" width="16" height="16" viewBox="-8 -8 16 16"><defs><radialGradient id="pg0" cx=".5" cy=".5" r=".5"><stop offset="0" stop-color="#d85000"/><stop offset=".5" stop-color="#e88020"/><stop offset="1" stop-color="#f0c08a"/></radialGradient></defs><g fill="url(#pg0)" stroke="#f6cfa0" stroke-width=".7"><path d="M0 0L0.0 -7.0L3.1 -3.1z"/><path d="M0 0L4.9 -4.9L4.3 0.0z"/><path d="M0 0L7.0 0.0L3.1 3.1z"/><path d="M0 0L4.9 4.9L0.0 4.3z"/><path d="M0 0L0.0 7.0L-3.1 3.1z"/><path d="M0 0L-4.9 4.9L-4.3 0.0z"/><path d="M0 0L-7.0 0.0L-3.1 -3.1z"/><path d="M0 0L-4.9 -4.9L-0.0 -4.3z"/></g><circle r="2.0" fill="#d84a00"/></svg>
<svg style="left:16px;top:871px" width="17" height="17" viewBox="0 0 17 17"><path d="M0 2.4L7 1.4V8H0zM8 1.25L17 0V8H8zM0 9H7V15.6L0 14.6zM8 9H17V17L8 15.75z" fill="#fff"/></svg>
<svg style="left:62px;top:870px" width="20" height="20" viewBox="0 0 20 20"><circle cx="12.500" cy="7.400" r="5" fill="none" stroke="#fff" stroke-width="1.300"/><path d="M8.900 11L2 17.600" stroke="#fff" stroke-width="1.500"/></svg>
<svg style="left:110px;top:871px" width="20" height="18" viewBox="0 0 20 18"><g fill="none" stroke="#fff" stroke-width="1.300"><path d="M2.600 1v16M12.400 1v16M2.600 3.500h9.800M2.600 14.500h9.800M2.600 5.800h9.800M2.600 12.200h9.800M16.500 1v3.500M16.500 10v7"/><rect x="15.500" y="5.500" width="2" height="3" fill="#fff"/></g></svg>
<svg style="left:158px;top:866px" width="28" height="28" viewBox="0 0 28 28">
<path d="M4 22C0 14 8 3 22 3c3 0 4 2 3 4c-1-2-5-2-9 0C9 10 5 17 6 23z" fill="#f4d23c"/>
<path d="M14 6.5a8.3 8.3 0 1 0 7.8 11h-4.3a4.3 4.3 0 0 1-7.6-1.5h12.4a8.3 8.3 0 0 0-8.3-9.500zM10 12.500a4.200 4.200 0 0 1 8 0z" fill="#5cc6f6" fill-rule="evenodd"/>
<path d="M6.5 15h16" stroke="#e03030" stroke-width=".7" opacity=".7"/></svg>
<svg style="left:207px;top:867px" width="27" height="26" viewBox="0 0 27 26"><defs><linearGradient id="np" x1="0" y1="0" x2="1" y2="1"><stop offset="0" stop-color="#f0f6fa"/><stop offset=".55" stop-color="#9ed4e6"/><stop offset="1" stop-color="#fafcfd"/></linearGradient></defs>
<path d="M9 3l13 1.500l2.500 18l-8 1.500l-15-6.500z" fill="url(#np)"/><path d="M1.5 17.500l6-5l15.5 4l1.500 6l-8 1.500z" fill="#46a8c8" opacity=".75"/><path d="M20 6l3 1l1.500 15.500l-3.500 1z" fill="#fff" opacity=".85"/></svg>
<svg style="left:257px;top:869px" width="24" height="22" viewBox="0 0 24 22"><path d="M1 2.500h7l1.500 1.500H22v15H1z" fill="#ffd866"/><path d="M1 6h21v13H1z" fill="#fbe08a"/><path d="M5 11.500h13v7.500H5z" fill="#46aee6"/><path d="M7 13.500h9v5.500H7z" fill="#8ed4f6"/><path d="M1 2.500h7l1.500 1.500H22v2H1z" fill="#f0b830"/></svg>
<svg style="left:1213px;top:875px" width="16" height="10"><path d="M1.500 8.200L8 1.800L14.500 8.200" fill="none" stroke="#fff" stroke-width="1.4"/></svg>
<svg style="left:1236px;top:872px" width="19" height="16" viewBox="0 0 19 16"><g fill="none" stroke="#fff" stroke-width="1.1"><rect x="5.500" y="2.500" width="12" height="8"/><path d="M11.500 10.500v3M7 14.500h9"/><rect x="1.500" y="4.500" width="4" height="6" fill="#000"/><path d="M1.500 7h4"/></g></svg>
<svg style="left:1260px;top:871px" width="19" height="18" viewBox="0 0 19 18"><g fill="none" stroke="#fff" stroke-width="1.1"><path d="M1.500 6.500h3l4-3.500v12l-4-3.500h-3z"/><path d="M11 6a4 4 0 0 1 0 6M13.200 3.800a7 7 0 0 1 0 10.400M15.400 1.800a10 10 0 0 1 0 14.400"/></g></svg>
<span id="t89" style="left:1287.7px;top:864.99px;font-size:11px;line-height:14px;height:14px;color:#fff;font-weight:normal;white-space:pre;letter-spacing:-0.715px;">POR</span>
<span id="t90" style="left:1285.4px;top:881.89px;font-size:11px;line-height:14px;height:14px;color:#fff;font-weight:normal;white-space:pre;letter-spacing:-0.279px;">PTB2</span>
<span id="t91" style="left:1338px;top:864.99px;font-size:11px;line-height:14px;height:14px;color:#fff;font-weight:normal;white-space:pre;letter-spacing:-0.206px;">08:53</span>
<span id="t92" style="left:1323px;top:881.89px;font-size:11px;line-height:14px;height:14px;color:#fff;font-weight:normal;white-space:pre;letter-spacing:0.375px;">09/11/2023</span>
<svg style="left:1397px;top:871px" width="26" height="24" viewBox="0 0 26 24"><path d="M2 1.500h15.500v12H8.500l-3 3.200V13.500H2z" fill="#fff"/><path d="M4.500 4.500h10.500M4.500 7h10.500M4.500 9.500h10.500" stroke="#000" stroke-width="1"/><circle cx="18" cy="15.800" r="6" fill="#111" stroke="#8a8a8a" stroke-width="1.200"/><path d="M16.500 14l1.800-1.500v6.500" fill="none" stroke="#eee" stroke-width="1.300"/></svg>
<div style="left:1434px;top:861px;width:1px;height:39px;background:#4a4a4a;"></div>
<svg style="left:366px;top:606px" width="28" height="24" viewBox="0 0 28 24">
<path d="M2 2h8v10H2z" fill="#ecdcf6" opacity=".85"/><path d="M2 10h6v8H2z" fill="#d4f0e6" opacity=".85"/>
<path d="M9.500 2h4.500v16h-4.500z" fill="#f4d466"/><path d="M14 2h3v16h-3z" fill="#c89a28"/><path d="M17 2h4v16h-4z" fill="#f6dc8a"/><path d="M21 2h4v16h-4z" fill="#f3e6c4" opacity=".8"/>
<circle cx="9.500" cy="11.500" r="4.200" fill="#fdfdf6" stroke="#e8e4d0" stroke-width=".8" opacity=".95"/>
<path d="M5.500 16.500c3 6 11 7 16 .5c-4 2.500-11 3-16-.5z" fill="#3a3a3a"/><path d="M10 17.500c2 1 5 1 6.500 0" stroke="#0a0a0a" stroke-width="1.600" fill="none"/>
</svg>
<svg style="left:470px;top:604px" width="30" height="27" viewBox="0 0 30 27">
<defs><radialGradient id="eg" cx=".45" cy=".6" r=".6"><stop offset="0" stop-color="#a8f860"/><stop offset=".6" stop-color="#58c828"/><stop offset="1" stop-color="#2e8a1c"/></radialGradient></defs>
<path d="M2 5.500l19-2.500l1.500 13.500l-19 3z" fill="#f4f4f4" stroke="#b4b4b4" stroke-width="1"/><path d="M2 5.500l10 8l9-10.500M3.500 19.500l8.500-6" fill="none" stroke="#bcbcbc" stroke-width="1"/>
<path d="M12 3.500l9-.5l.5 4l-7 2z" fill="#cfe4f4" opacity=".8"/>
<path d="M19 7l6 12l-6 6.500l-8.500-5l3.500-7.500z" fill="url(#eg)"/>
<path d="M19 7l6 12l-6 6.500" fill="none" stroke="#2a7418" stroke-width="1.400"/>
<path d="M10 22l9 4l6-1v1.500h-15z" fill="#dff6d4" opacity=".9"/>
</svg>
<svg style="left:883px;top:607px" width="26" height="22" viewBox="0 0 26 22">
<path d="M7 1.500h11v6H7z" fill="#fafafa" stroke="#555" stroke-width="1"/>
<rect x="1.500" y="6.500" width="22" height="12" fill="#bcd6ce" stroke="#444" stroke-width="1.200"/><path d="M2 10.500h21" stroke="#555" stroke-width="1"/><rect x="14" y="8" width="8" height="2" fill="#333"/>
<path d="M5 14.500h13v6H5z" fill="#fff" stroke="#666" stroke-width="1"/><path d="M3 12.500h6" stroke="#3aa" stroke-width="1.200"/>
</svg>
<svg style="left:986px;top:606px" width="27" height="25" viewBox="0 0 27 25">
<defs><linearGradient id="sg" x1="0" y1="0" x2="1" y2="1"><stop offset="0" stop-color="#7cd0fa"/><stop offset="1" stop-color="#1488e0"/></linearGradient></defs>
<rect x="0" y="2" width="26" height="16.500" fill="#dceefc" opacity=".8"/>
<rect x="2.600" y="2.600" width="21" height="15.800" fill="#eaf6ff" stroke="#1c3c6c" stroke-width="1.200"/>
<path d="M3 3.600h20" stroke="#1c3c6c" stroke-width="1.600"/><path d="M4.500 6.500h17M4.500 8.500h17" stroke="#a8cce8" stroke-width=".9"/>
<path d="M6.500 10.500v7M8.500 10.500v7M10.500 10.500v7" stroke="#fff" stroke-width="1.100"/><path d="M6 17.500h6" stroke="#2a4a6a" stroke-width="1"/>
<path d="M12.500 10.500c4-2 8-1.500 10 0v8l-4 5l-5.500-5.500z" fill="url(#sg)"/>
<path d="M14 19l4 4.500l3-4" fill="none" stroke="#1a6a8a" stroke-width="1.200"/>
</svg>
</body></html>
